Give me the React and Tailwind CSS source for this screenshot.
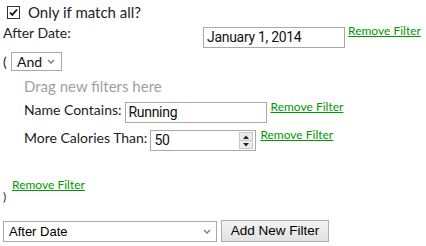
import { useState } from 'react'

// ─── Small pieces ──────────────────────────────────────────────────────────────

function CheckBox({ checked }) {
  return (
    <span className="w-[13px] h-[13px] border border-[#333] bg-white flex items-center justify-center">
      {checked && (
        <svg width="9" height="9" viewBox="0 0 9 9" aria-hidden="true">
          <path d="M1 4.5l2.3 2.4L8 1.5" stroke="#111" strokeWidth="1.8" fill="none" />
        </svg>
      )}
    </span>
  )
}

function Chevron() {
  return (
    <svg width="8" height="5" viewBox="0 0 8 5" aria-hidden="true">
      <path d="M1 1l3 3 3-3" stroke="#777" strokeWidth="1.3" fill="none" />
    </svg>
  )
}

function RemoveLink({ className = '' }) {
  return (
    <a href="#" className={`whitespace-nowrap font-['Lato',sans-serif] text-[12px] leading-[13px] text-[#009a00] underline underline-offset-[1px] ${className}`}>
      Remove Filter
    </a>
  )
}

function TextBox({ children, className = '' }) {
  return (
    <div className={`h-[21px] border border-[#a9a9a9] bg-white flex items-center px-[3px] font-['Roboto',sans-serif] text-[14px] tracking-[-0.3px] text-[#111] ${className}`}>
      {children}
    </div>
  )
}

function Spinner() {
  return (
    <div className="ml-auto w-[14px] h-[17px] border border-[#c8c8c8] bg-[#ececec] flex flex-col">
      <div className="flex-1 flex items-center justify-center border-b border-[#c8c8c8]">
        <svg width="6" height="4" viewBox="0 0 6 4" aria-hidden="true"><path d="M0 4L3 0.5L6 4z" fill="#222" /></svg>
      </div>
      <div className="flex-1 flex items-center justify-center">
        <svg width="6" height="4" viewBox="0 0 6 4" aria-hidden="true"><path d="M0 0L3 3.5L6 0z" fill="#222" /></svg>
      </div>
    </div>
  )
}

// ─── Filter builder ────────────────────────────────────────────────────────────

export default function App() {
  const [matchAll] = useState(true)

  return (
    <div className="w-[426px] h-[246px] bg-white text-[#222] font-['Lato',sans-serif] pl-[3px] overflow-hidden">

      {/* Match all */}
      <div className="flex items-center h-[20px] pt-[2px] box-content pl-[4px] gap-[8px]">
        <CheckBox checked={matchAll} />
        <span className="text-[15px] leading-[20px]">Only if match all?</span>
      </div>

      {/* After date */}
      <div className="flex items-start mt-[1px]">
        <span className="w-[200px] text-[14px] leading-[20px]">After Date:</span>
        <TextBox className="w-[142px] mt-[4px]">January 1, 2014</TextBox>
        <RemoveLink className="ml-[3px] mt-[1px]" />
      </div>

      {/* Group */}
      <div className="flex items-center mt-[4px] h-[19px]">
        <span className="text-[14px] leading-[19px] w-[8px]">(</span>
        <div className="w-[51px] h-[19px] border border-[#a9a9a9] flex items-center justify-between pl-[5px] pr-[6px]">
          <span className="text-[14px] leading-[17px] text-[#111]">And</span>
          <Chevron />
        </div>
      </div>

      <div className="pl-[21px]">
        <p className="text-[15px] leading-[20px] text-[#a0a0a0] mt-[5px]">Drag new filters here</p>

        <div className="flex items-start mt-[4px]">
          <span className="text-[14px] leading-[20px] mr-[3px]">Name Contains:</span>
          <TextBox className="w-[142px] mt-[2px]">Running</TextBox>
          <RemoveLink className="ml-[4px]" />
        </div>

        <div className="flex items-start mt-[5px]">
          <span className="text-[14px] leading-[20px] mr-[3px]">More Calories Than:</span>
          <TextBox className="w-[106px] mt-[2px] pr-[2px]">
            <span>50</span>
            <Spinner />
          </TextBox>
          <RemoveLink className="ml-[4px]" />
        </div>
      </div>

      {/* Close group */}
      <div className="flex items-start mt-[27px]">
        <span className="text-[12px] leading-[14px] w-[9px] mt-[12px]">)</span>
        <RemoveLink />
      </div>

      {/* Add filter */}
      <div className="flex items-start gap-[4px] mt-[16px]">
        <div className="w-[214px] h-[21px] mt-[1px] border border-[#a9a9a9] bg-white flex items-center justify-between pl-[5px] pr-[5px]">
          <span className="font-['Liberation_Sans',Arial,sans-serif] text-[13px] text-black">After Date</span>
          <Chevron />
        </div>
        <button className="w-[108px] h-[22px] border border-[#adadad] bg-gradient-to-b from-[#f2f2f2] to-[#e2e2e2] font-['Liberation_Sans',Arial,sans-serif] text-[13.5px] text-black">
          Add New Filter
        </button>
      </div>
    </div>
  )
}
